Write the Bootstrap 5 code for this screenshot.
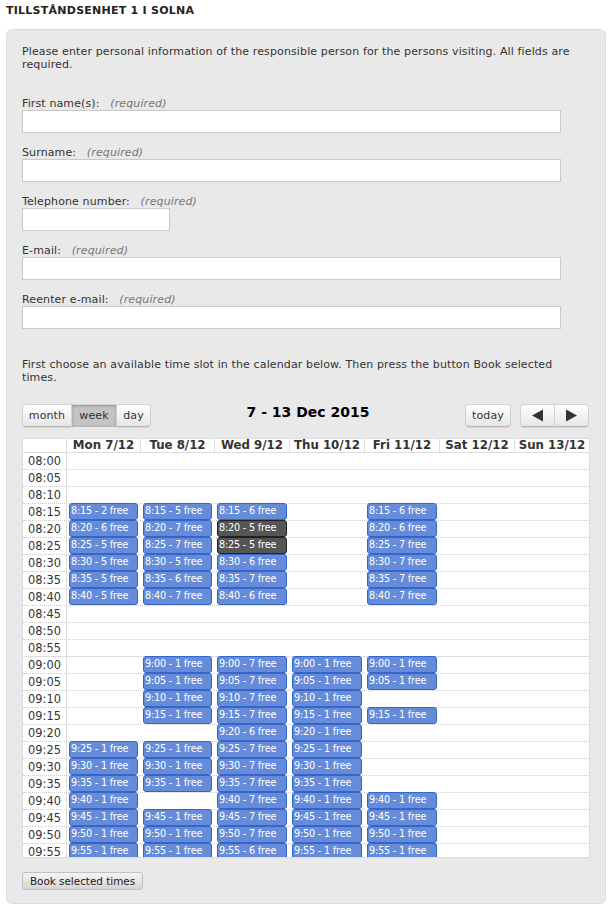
<!DOCTYPE html>
<html lang="en">
<head>
<meta charset="utf-8">
<title>Tillståndsenhet 1 i Solna</title>
<link rel="stylesheet" href="https://cdn.jsdelivr.net/npm/bootstrap@5.3.0/dist/css/bootstrap.min.css">
<style>
html,body{background:#fff;}
body{font-family:"DejaVu Sans",Verdana,sans-serif;font-size:11px;line-height:13px;color:#333;width:614px;height:914px;overflow:hidden;}
.page-title{font-size:11px;font-weight:700;color:#222;line-height:13px;margin:0;padding:4px 0 0 6px;height:29px;letter-spacing:.25px;}
.panel-box{margin:0 8px 0 6px;width:600px;height:875px;background:#e9e9e9;border:1px solid #ddd;border-radius:6px;padding:15px 15px 0;}
.panel-text{margin:0;line-height:13px;color:#333;letter-spacing:.125px;width:560px;}
.form-area{margin-top:26px;}
.field-label{display:block;height:13px;line-height:13px;margin:0;letter-spacing:.125px;}
.field-label em{color:#777;margin-left:7px;}
.field-input{display:block;height:23px;width:539px;border:1px solid #c9c9c9;background:#fff;padding:0;border-radius:0;}
.field-input.short-input{width:148px;}
.field-group{margin-bottom:13px;}
.para-two{margin-top:29px;}
.view-btn{font-size:11px;line-height:13px;color:#333;height:23px;border:1px solid #d2d2d2;border-bottom-color:#b5b5b5;background:linear-gradient(#fff,#e6e6e6);padding:0;border-radius:0;box-shadow:0 1px 1px rgba(0,0,0,.08);letter-spacing:.125px;display:flex;align-items:center;justify-content:center;}
.view-btn.is-on{background:#c4c4c4;box-shadow:inset 0 1px 3px rgba(0,0,0,.25);border-left:0;}
.view-btn.round-left{border-radius:4px 0 0 4px;}
.view-btn.round-right{border-radius:0 4px 4px 0;border-left:0;}
.view-btn.round-all{border-radius:4px;}
.btn-month{width:50px;}
.btn-week{width:45px;}
.btn-day{width:34px;}
.btn-today{width:46px;}
.btn-prev{width:35px;}
.btn-next{width:34px;}
.cal-bar{height:23px;margin-top:20px;margin-bottom:11px;margin-right:1px;}
.cal-title{font-size:14px;font-weight:700;color:#000;line-height:17px;margin:0 0 6px;}
.cal-gap{gap:9px;}
.cal-box{width:568px;height:420px;overflow:hidden;background:#fff;border:1px solid #ddd;}
.cal-head,.cal-row{display:grid;grid-template-columns:44px 74px 74px 75px 75px 75px 75px 74px;}
.cal-head{height:14px;border-bottom:1px solid #ddd;}
.cal-head div{font-weight:700;text-align:center;line-height:13px;border-right:1px solid #ddd;color:#333;font-size:11.8px;white-space:nowrap;}
.cal-head div:last-child{border-right:0;}
.cal-row{height:17px;border-bottom:1px dotted #ccc;}
.cal-row.hour-end{border-bottom:1px solid #ddd;}
.cal-row.cut-row{height:14px;border-bottom:0;}
.cal-time{font-size:11.4px;text-align:center;line-height:16px;color:#333;border-right:1px solid #ddd;}
.cut-row .cal-time{line-height:14px;padding-top:1px;height:14px;}
.cal-cell{padding:0 3px 0 2px;min-width:0;}
.slot{display:block;height:17px;margin:-1px 0 0;background:#668cd9;border:1px solid #3366cc;border-radius:3px;color:#fff;font-size:9.7px;letter-spacing:-.2px;line-height:13px;padding-left:1px;white-space:nowrap;overflow:hidden;position:relative;z-index:1;}
.cut-row .slot{height:15px;border-bottom:0;border-radius:3px 3px 0 0;}
.slot.taken{background:#555;border-color:#222;}
.submit-btn{margin-top:14px;height:18px;width:121px;padding:0;font-size:10.4px;line-height:15px;color:#222;background:linear-gradient(#f5f3f4,#d9d5d7);border:1px solid #c4c0c2;border-radius:3px;}
</style>
</head>
<body>
<h1 class="page-title">TILLSTÅNDSENHET 1 I SOLNA</h1>
<div class="panel-box">
  <p class="panel-text">Please enter personal information of the responsible person for the persons visiting. All fields are required.</p>
  <form class="form-area" onsubmit="return false">
    <div class="field-group"><label class="field-label">First name(s): <em>(required)</em></label><input class="field-input" type="text"></div>
    <div class="field-group"><label class="field-label">Surname: <em>(required)</em></label><input class="field-input" type="text"></div>
    <div class="field-group"><label class="field-label">Telephone number: <em>(required)</em></label><input class="field-input short-input" type="text"></div>
    <div class="field-group"><label class="field-label">E-mail: <em>(required)</em></label><input class="field-input" type="text"></div>
    <div class="field-group"><label class="field-label">Reenter e-mail: <em>(required)</em></label><input class="field-input" type="text"></div>
    <p class="panel-text para-two">First choose an available time slot in the calendar below. Then press the button Book selected times.</p>
    <div class="cal-bar d-flex justify-content-between align-items-center">
      <div class="d-flex">
        <button type="button" class="view-btn btn-month round-left">month</button>
        <button type="button" class="view-btn btn-week is-on">week</button>
        <button type="button" class="view-btn btn-day round-right">day</button>
      </div>
      <h2 class="cal-title">7 - 13 Dec 2015</h2>
      <div class="d-flex cal-gap">
        <button type="button" class="view-btn btn-today round-all">today</button>
        <div class="d-flex">
          <button type="button" class="view-btn btn-prev round-left" aria-label="previous"><svg width="13" height="13" viewBox="0 0 13 13"><path d="M1 6.5 12 .5v12z" fill="#333"/></svg></button>
          <button type="button" class="view-btn btn-next round-right" aria-label="next"><svg width="13" height="13" viewBox="0 0 13 13"><path d="M12 6.5 1 .5v12z" fill="#333"/></svg></button>
        </div>
      </div>
    </div>
    <div class="cal-box" id="cal"></div>
    <button type="submit" class="submit-btn">Book selected times</button>
  </form>
</div>
<script>
const days=['Mon 7/12','Tue 8/12','Wed 9/12','Thu 10/12','Fri 11/12','Sat 12/12','Sun 13/12'];
const d={
0:{'8:15':2,'8:20':6,'8:25':5,'8:30':5,'8:35':5,'8:40':5,'9:25':1,'9:30':1,'9:35':1,'9:40':1,'9:45':1,'9:50':1,'9:55':1},
1:{'8:15':5,'8:20':7,'8:25':7,'8:30':5,'8:35':6,'8:40':7,'9:00':1,'9:05':1,'9:10':1,'9:15':1,'9:25':1,'9:30':1,'9:35':1,'9:45':1,'9:50':1,'9:55':1},
2:{'8:15':6,'8:20':5,'8:25':5,'8:30':6,'8:35':7,'8:40':6,'9:00':7,'9:05':7,'9:10':7,'9:15':7,'9:20':6,'9:25':7,'9:30':7,'9:35':7,'9:40':7,'9:45':7,'9:50':7,'9:55':6},
3:{'9:00':1,'9:05':1,'9:10':1,'9:15':1,'9:20':1,'9:25':1,'9:30':1,'9:35':1,'9:40':1,'9:45':1,'9:50':1,'9:55':1},
4:{'8:15':6,'8:20':6,'8:25':7,'8:30':7,'8:35':7,'8:40':7,'9:00':1,'9:05':1,'9:15':1,'9:40':1,'9:45':1,'9:50':1,'9:55':1}
};
let h='<div class="cal-head"><div></div>'+days.map(x=>'<div>'+x+'</div>').join('')+'</div>';
for(let i=0;i<24;i++){
  const H=8+Math.floor(i/12),M=String((i%12)*5).padStart(2,'0'),t=H+':'+M;
  h+='<div class="cal-row'+(i==11?' hour-end':'')+(i==23?' cut-row':'')+'"><div class="cal-time">0'+t+'</div>';
  for(let c=0;c<7;c++){
    const v=d[c]&&d[c][t];
    const dark=c==2&&(t=='8:20'||t=='8:25');
    h+='<div class="cal-cell">'+(v?'<span class="slot'+(dark?' taken':'')+'">'+t+' - '+v+' free</span>':'')+'</div>';
  }
  h+='</div>';
}
document.getElementById('cal').innerHTML=h;
</script>
<script src="https://cdn.jsdelivr.net/npm/bootstrap@5.3.0/dist/js/bootstrap.bundle.min.js"></script>
</body>
</html>
